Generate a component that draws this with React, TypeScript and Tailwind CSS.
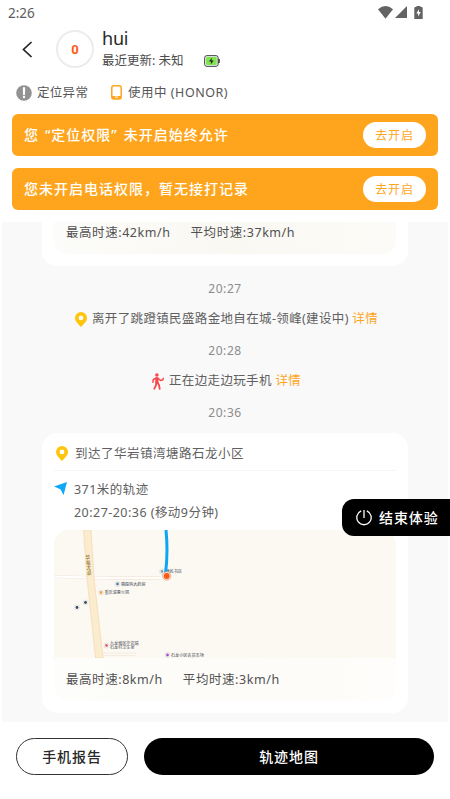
import React from "react";

const FONT = "font-['Noto_Sans','Noto_Sans_CJK_SC',sans-serif]";

function Pin() {
  return (
    <svg width="12" height="15" viewBox="0 0 12 15" className="shrink-0">
      <path fillRule="evenodd" fill="#ffc40c" d="M6 0a6 6 0 0 0-6 6c0 3.1 2.6 5.200 6 9 3.400-3.800 6-5.900 6-9a6 6 0 0 0-6-6Zm0 3.500a2.400 2.400 0 1 1 0 4.800 2.400 2.400 0 0 1 0-4.800Z" />
    </svg>
  );
}

function Walker() {
  return (
    <svg width="12" height="17" viewBox="0 0 12 17" className="shrink-0" fill="none" stroke="#f8484c" strokeLinecap="round" strokeLinejoin="round">
      <circle cx="4.900" cy="2" r="1.800" fill="#f8484c" stroke="none" />
      <path d="M4.900 5.700v3.800" strokeWidth="3.300" />
      <path d="M4.200 5 1.200 6.700.9 9.300M6 5.200l2.600 2.300 2.300-.7.3-1.500" strokeWidth="1.500" />
      <path d="m4.300 9.800-.5 2.900-1.500 3M5.600 9.800l1.500 2.500.6 3.500" strokeWidth="1.800" />
    </svg>
  );
}

function StatusBar() {
  return (
    <div className="flex h-6 items-center justify-between pl-2 pr-[27px]">
      <span className="pt-px text-[13.500px] leading-5 text-[#5c5c5c]">2:26</span>
      <div className="flex items-center">
        <svg width="15" height="13" viewBox="0 0 15 13"><path fill="#636363" d="M0 3.200Q7.500-3 15 3.200L7.500 12.700Z" /></svg>
        <svg width="12" height="12" viewBox="0 0 12 12" className="ml-[2px]"><path fill="#636363" d="M12 0v12H0Z" /></svg>
        <svg width="9" height="13" viewBox="0 0 9 13" className="ml-[7px]">
          <path fill="#636363" d="M2.500 1V0h4v1H8l.7.700V13H.3V1.700L1 1Z" />
          <path fill="#fff" d="M5 3.300 2.300 7.500h1.800v3L6.800 6H5Z" />
        </svg>
      </div>
    </div>
  );
}

function Banner({ children }: { children: React.ReactNode }) {
  return (
    <div className="flex h-[42px] items-center justify-between rounded-[6px] bg-[#ffa51d] px-3 font-medium">
      <span className="whitespace-nowrap text-[14px] leading-5 tracking-[1px] text-white [word-spacing:1.3px]">{children}</span>
      <button className="h-[26px] w-[63px] rounded-full bg-white pt-px text-[12px] font-normal leading-[25px] tracking-[0.8px] text-[#ffa51d]">去开启</button>
    </div>
  );
}

function Time({ children }: { children: React.ReactNode }) {
  return <div className="h-5 text-center text-[12px] leading-5 tracking-[0.55px] text-[#8c8c8c]">{children}</div>;
}

function Speeds({ max, avg }: { max: string; avg: string }) {
  return (
    <div className="flex gap-5 pl-3 text-[12.500px] leading-5 tracking-[0.56px] text-[#505050]">
      <span>最高时速:{max}</span>
      <span>平均时速:{avg}</span>
    </div>
  );
}

function Poi({ x, y, color, label, second }: { x: number; y: number; color: string; label: string; second?: string }) {
  return (
    <g>
      <circle cx={x} cy={y} r="2.500" fill="#fff" stroke="#c7c9cc" strokeWidth=".5" />
      <circle cx={x} cy={y} r="1.400" fill={color} />
      <text x={x + 3.500} y={second ? y - 0.200 : y + 1.600} fontSize="4.100" fill="#3f4854">{label}</text>
      {second && <text x={x + 3.500} y={y + 3.900} fontSize="4.100" fill="#3f4854">{second}</text>}
    </g>
  );
}

function RouteMap() {
  return (
    <svg width="342" height="128" viewBox="0 0 342 128" className="block">
      <rect width="342" height="128" fill="#fcf9f2" />
      <path d="M0 46.500 50 48h56" fill="none" stroke="#f1e5dc" strokeWidth="3" />
      <path d="M0 46.500 50 48h60" fill="none" stroke="#fff" strokeWidth="2" />
      <path d="M54 46.700h53M54 49.300h53" stroke="#f3e4c8" strokeWidth=".6" strokeDasharray="1.500 1" />
      <path d="M46 123h36M48 125.500h34" stroke="#f0e5df" strokeWidth=".7" />
      <path d="M29.500 0h7.500l3 48 9 80h-7.500L33 48Z" fill="#fbebcf" stroke="#f4d8ac" strokeWidth=".7" />
      <g fontSize="4.400" fontWeight="500" fill="#8f7028">
        <text x="31.500" y="29.300">华</text><text x="32" y="34.300">福</text>
        <text x="32.500" y="39.300">大</text><text x="33" y="44.300">道</text>
      </g>
      <Poi x={108} y={41.500} color="#93a0ad" label="便民书店" />
      <Poi x={63.500} y={54} color="#5082a0" label="跳蹬购大药房" />
      <Poi x={47} y={62.500} color="#f5a13b" label="重庆渝惠火锅" />
      <Poi x={31.500} y={72.500} color="#344759" label="" />
      <Poi x={23} y={77.500} color="#344759" label="" />
      <Poi x={52.500} y={115.500} color="#e46065" label="九龙坡区华岩镇" second="石龙村卫生室" />
      <Poi x={113.500} y={125} color="#a44dcc" label="石龙小区农贸市场" />
      <path d="M112 0q2.200 22-.5 44" fill="none" stroke="#0ba6f5" strokeWidth="3" />
      <circle cx="112.700" cy="46" r="4.200" fill="#fbe0d5" stroke="#ec9a7b" strokeWidth=".7" />
      <circle cx="112.700" cy="46" r="2.900" fill="#f95d15" />
    </svg>
  );
}

export default function App() {
  return (
    <div className={`relative flex h-[799px] w-[450px] flex-col overflow-hidden bg-white ${FONT}`}>
      <header className="h-[222px] shrink-0">
        <StatusBar />
        <div className="flex h-[50px] items-center pl-[22px]">
          <svg width="11" height="17" viewBox="0 0 11 17"><path d="M9.500 1 1.500 8.500l8 7.500" fill="none" stroke="#222" strokeWidth="1.700" /></svg>
          <div className="ml-[23px] flex size-[38px] items-center justify-center rounded-full border-[2.500px] border-[#ececec] pt-px font-[Roboto,sans-serif] text-[13px] font-bold text-[#fa5a14]">0</div>
          <div className="ml-2 h-[50px]">
            <div className="pt-[2px] text-[18px] leading-6 tracking-[-0.2px] text-[#292929]">hui</div>
            <div className="flex items-center pt-px">
              <span className="w-[102px] whitespace-nowrap text-[12.500px] leading-5 text-[#4c4c4c]">最近更新: 未知</span>
              <svg width="16" height="12" viewBox="0 0 16 12">
                <rect x=".7" y=".7" width="13.400" height="10.600" rx="2" fill="#fff" stroke="#353535" />
                <rect x="2" y="2" width="10.800" height="8" rx="1" fill="#7fe64e" />
                <path d="M15 4v4" stroke="#353535" strokeWidth="1.500" />
                <path d="m7.900 2.800-3 3.700h2.200l-.5 2.900 3.200-3.900H7.500Z" fill="#222" />
              </svg>
            </div>
          </div>
        </div>
        <div className="flex h-10 items-center pb-[3px] pl-4 text-[12.500px] leading-5 tracking-[0.3px] text-[#565656]">
          <svg width="16" height="16" viewBox="0 0 16 16"><circle cx="8" cy="8" r="7.800" fill="#929292" /><path d="M8 3.200v6" stroke="#fff" strokeWidth="2.200" strokeLinecap="round" /><circle cx="8" cy="12" r="1.200" fill="#fff" /></svg>
          <span className="ml-[5px] w-[74px]">定位异常</span>
          <svg width="11" height="15" viewBox="0 0 11 15"><rect x=".8" y=".8" width="9.400" height="13.200" rx="2" fill="none" stroke="#ffa51d" strokeWidth="1.500" /><path d="M1 11h9v3H1Z" fill="#ffa51d" /><path d="M4 12.100h3" stroke="#fff" /></svg>
          <span className="ml-[6px] whitespace-nowrap tracking-[0.52px]">使用中 (HONOR)</span>
        </div>
        <div className="flex flex-col gap-3 px-3">
          <Banner>您 “定位权限” 未开启始终允许</Banner>
          <Banner>您未开启电话权限，暂无接打记录</Banner>
        </div>
      </header>

      <main className="mx-[2px] h-[500px] shrink-0 overflow-hidden bg-[#f9f9f9] px-10">
        <section className="h-11 rounded-b-[15px] bg-white px-3">
          <div className="h-8 rounded-b-[13px] bg-linear-to-r from-[#fcfcfa] via-[#faf8f3] to-[#fdfbf7] pt-px">
            <Speeds max="42km/h" avg="37km/h" />
          </div>
        </section>
        <div className="mt-[13px]"><Time>20:27</Time></div>
        <div className="mt-[10px] flex h-5 items-center pl-[33px] text-[12.500px] leading-5 tracking-[0.35px] text-[#606060]">
          <Pin /><span className="ml-[5px] whitespace-nowrap">离开了跳蹬镇民盛路金地自在城-领峰(建设中) <span className="text-[#ffa51d]">详情</span></span>
        </div>
        <div className="mt-3"><Time>20:28</Time></div>
        <div className="mt-[10px] flex h-5 items-center pl-[110px] text-[12.500px] leading-5 tracking-[0.35px] text-[#606060]">
          <Walker /><span className="ml-[5px] whitespace-nowrap">正在边走边玩手机 <span className="text-[#ffa51d]">详情</span></span>
        </div>
        <div className="mt-3"><Time>20:36</Time></div>
        <section className="mt-[10px] h-[280px] rounded-[15px] bg-white px-3 text-[12.500px] leading-5 text-[#606060]">
          <div className="flex h-[38px] items-center border-b border-[#f5f5f5] pt-[5px] tracking-[0.5px]">
            <span className="ml-[2px] -mt-px"><Pin /></span><span className="ml-[7px]">到达了华岩镇湾塘路石龙小区</span>
          </div>
          <div className="flex h-[59px] pt-2">
            <svg width="13" height="13" viewBox="0 0 13 13" className="mt-[3px]"><path fill="#0fa7f7" d="M13 0 9.600 13 6.400 7.200 0 4.600Z" /></svg>
            <div className="ml-[7px] pt-px tracking-[0.46px]">
              <div className="h-[23px]">371米的轨迹</div>
              <div>20:27-20:36 (移动9分钟)</div>
            </div>
          </div>
          <div className="overflow-hidden rounded-[15px]">
            <RouteMap />
            <div className="h-[43px] bg-linear-to-r from-[#fdfdfb] via-[#fdfcf8] to-[#fefdfb] pt-3">
              <Speeds max="8km/h" avg="3km/h" />
            </div>
          </div>
        </section>
      </main>

      <footer className="flex h-[77px] shrink-0 gap-4 px-4 pt-4 text-[14px] font-medium tracking-[0.9px]">
        <button className="h-[37px] w-28 rounded-full border-[1.500px] border-[#333] text-[#292929]">手机报告</button>
        <button className="h-[37px] flex-1 rounded-full bg-black text-white">轨迹地图</button>
      </footer>

      <button className="absolute right-0 top-[499px] flex h-[37px] w-[108px] items-center rounded-l-xl bg-black pl-[14px] text-[14px] font-medium tracking-[0.9px] text-white">
        <svg width="16" height="17" viewBox="0 0 16 17" fill="none" stroke="#fff" strokeWidth="1.300"><path d="M5.200 1.900a7.200 7.200 0 1 0 5.600 0M8 1v8" /></svg>
        <span className="ml-[7px]">结束体验</span>
      </button>
    </div>
  );
}
